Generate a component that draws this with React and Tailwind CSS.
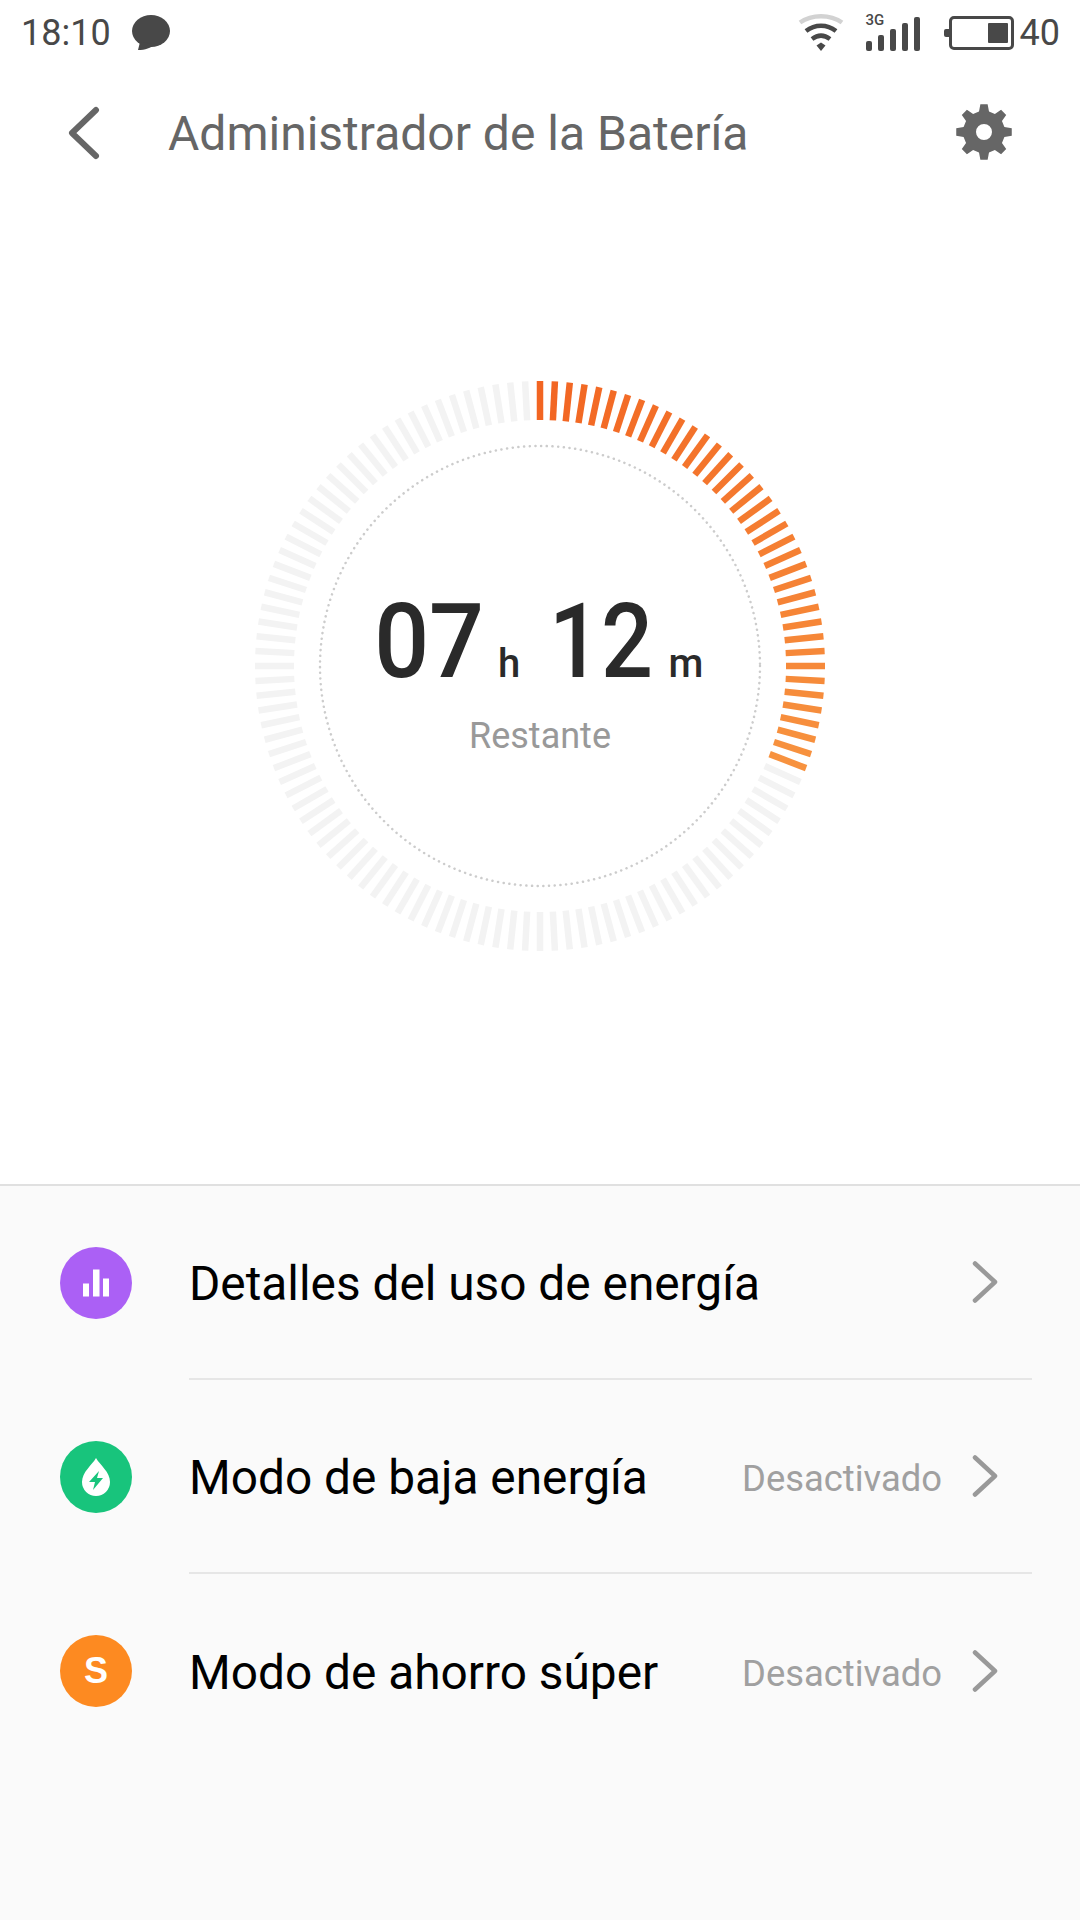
const TICKS = 120;
const ACTIVE = 38;

// orange ticks fade from #f26522 at the top to #f7923f at the end of the arc
const tickColor = (i) => {
  if (i >= ACTIVE) return '#f3f3f3';
  const t = i / (ACTIVE - 1);
  const r = Math.round(242 + 5 * t);
  const g = Math.round(101 + 45 * t);
  const b = Math.round(34 + 29 * t);
  return `rgb(${r},${g},${b})`;
};

const BatteryRing = () => (
  <svg width="600" height="600" viewBox="-300 -300 600 600">
    {Array.from({ length: TICKS }).map((_, i) => (
      <rect
        key={i}
        x="-3.25"
        y="-285"
        width="6.5"
        height="39"
        fill={tickColor(i)}
        transform={`rotate(${i * 3})`}
      />
    ))}
    <circle
      cx="0"
      cy="0"
      r="220"
      fill="none"
      stroke="#cccccc"
      strokeWidth="2.5"
      strokeLinecap="round"
      strokeDasharray="0.1 5.6"
    />
  </svg>
);

// 8 teeth gear, points worked out instead of typed by hand
const gearPath = () => {
  const pts = [];
  const rOut = 28;
  const rIn = 21;
  for (let i = 0; i < 8; i++) {
    const a = (i * Math.PI) / 4 - Math.PI / 2;
    [
      [-0.24, rIn],
      [-0.13, rOut],
      [0.13, rOut],
      [0.24, rIn],
    ].forEach(([d, r]) => pts.push([r * Math.cos(a + d), r * Math.sin(a + d)]));
  }
  return 'M' + pts.map((p) => p[0].toFixed(2) + ' ' + p[1].toFixed(2)).join('L') + 'Z';
};

const GearIcon = () => (
  <svg width="58" height="58" viewBox="-29 -29 58 58">
    <path
      fillRule="evenodd"
      fill="#666666"
      d={gearPath() + 'M8 0A8 8 0 1 0 -8 0A8 8 0 1 0 8 0Z'}
    />
  </svg>
);

const StatusIcons = () => (
  <div className="flex items-center">
    <svg width="46" height="40" viewBox="0 0 46 40" fill="none" className="mr-[22px]">
      <path d="M2 9.5C14 1 32 1 44 9.5" stroke="#d2d2d2" strokeWidth="4.5" />
      <path d="M8 18C17 11 29 11 38 18" stroke="#484848" strokeWidth="4.5" />
      <path d="M14 26C20 21.5 26 21.5 32 26" stroke="#484848" strokeWidth="4.5" />
      <path d="M18.5 32.5L23 29.5L27.5 32.5L23 38Z" fill="#484848" />
    </svg>
    <div className="relative w-[54px] h-[36px] mr-[24px]">
      <span className="absolute left-0 top-[-3px] text-[15px] leading-[16px] font-medium text-[#484848]">
        3G
      </span>
      <div className="absolute inset-0 flex items-end justify-between">
        <div className="w-[6px] h-[10px] rounded-[2px] bg-[#484848]" />
        <div className="w-[6px] h-[16px] rounded-[2px] bg-[#484848]" />
        <div className="w-[6px] h-[22px] rounded-[2px] bg-[#484848]" />
        <div className="w-[6px] h-[28px] rounded-[2px] bg-[#484848]" />
        <div className="w-[6px] h-[34px] rounded-[2px] bg-[#484848]" />
      </div>
    </div>
    <div className="flex items-center mr-[6px]">
      <div className="w-[5px] h-[8px] rounded-l-[2px] bg-[#484848]" />
      <div className="w-[65px] h-[34px] rounded-[5px] border-[3.5px] border-[#484848] flex justify-end items-center pr-[3px]">
        <div className="w-[20px] h-[20px] rounded-[1px] bg-[#484848]" />
      </div>
    </div>
    <span className="text-[36px] leading-none text-[#484848]">40</span>
  </div>
);

const BackArrow = () => (
  <svg width="36" height="54" viewBox="0 0 36 54" fill="none">
    <path
      d="M30 4L6 27L30 50"
      stroke="#666666"
      strokeWidth="6"
      strokeLinecap="round"
      strokeLinejoin="round"
    />
  </svg>
);

const Chevron = () => (
  <svg width="26" height="44" viewBox="0 0 26 44" fill="none">
    <path
      d="M3 3.5L23 22L3 40.5"
      stroke="#999999"
      strokeWidth="4.5"
      strokeLinecap="round"
      strokeLinejoin="round"
    />
  </svg>
);

const MenuRow = ({ icon, color, label, value, last }) => (
  <div className="flex items-stretch h-[194px] pl-[60px]">
    <div className="flex items-center">
      <div
        className={`w-[72px] h-[72px] rounded-full flex items-center justify-center ${color}`}
      >
        {icon}
      </div>
    </div>
    <div
      className={`flex-1 ml-[57px] mr-[48px] pr-[34px] flex items-center justify-between ${
        last ? '' : 'border-b-2 border-[#e6e6e6]'
      }`}
    >
      <span className="text-[47.8px] text-black leading-none mt-[5px]">{label}</span>
      <div className="flex items-center">
        {value && (
          <span className="text-[36.4px] text-[#a0a0a0] mr-[30px] mt-[6px]">{value}</span>
        )}
        <Chevron />
      </div>
    </div>
  </div>
);

const App = () => {
  return (
    <div className="w-[1080px] h-[1920px] flex flex-col bg-white font-['Roboto',sans-serif]">
      <div className="h-[64px] flex items-center justify-between pl-[21px] pr-[20px] pt-[2px]">
        <div className="flex items-center">
          <span className="text-[36px] leading-none text-[#484848]">18:10</span>
          <svg width="40" height="38" viewBox="0 0 40 38" className="ml-[20px]">
            <ellipse cx="20" cy="17" rx="19" ry="16" fill="#484848" />
            <path d="M9 28L7 36C14 36 20 34 24 30Z" fill="#484848" />
          </svg>
        </div>
        <StatusIcons />
      </div>

      <div className="h-[136px] flex items-center justify-between pl-[66px] pr-[67px]">
        <div className="flex items-center">
          <div className="mt-[2px]">
            <BackArrow />
          </div>
          <span className="ml-[66px] mt-[3px] text-[48px] leading-none text-[#666666]">
            Administrador de la Batería
          </span>
        </div>
        <GearIcon />
      </div>

      <div className="flex-1 flex justify-center pt-[166px]">
        <div className="relative w-[600px] h-[600px]">
          <BatteryRing />
          <div className="absolute inset-0 flex flex-col items-center pt-[224px]">
            <div className="flex items-baseline pr-[7px] text-[#2a2a2a] font-medium leading-none">
              <span className="text-[104px] inline-block scale-x-[.93]">07</span>
              <span className="text-[40px] ml-[10px]">h</span>
              <span className="text-[104px] inline-block scale-x-[.88] ml-[22px]">12</span>
              <span className="text-[40px] ml-[8px]">m</span>
            </div>
            <span className="mt-[24px] text-[36px] leading-none text-[#999999]">Restante</span>
          </div>
        </div>
      </div>

      <div className="h-[736px] bg-[#fafafa] border-t-2 border-[#e0e0e0]">
        <MenuRow
          color="bg-[#ab60f5]"
          label="Detalles del uso de energía"
          icon={
            <svg width="28" height="28" viewBox="0 0 28 28" fill="#ffffff">
              <rect x="1" y="14.5" width="6" height="13" />
              <rect x="11" y="0.5" width="6.5" height="27" />
              <rect x="21" y="9.5" width="6" height="18" />
            </svg>
          }
        />
        <MenuRow
          color="bg-[#18c47c]"
          label="Modo de baja energía"
          value="Desactivado"
          icon={
            <svg width="30" height="40" viewBox="0 0 30 40">
              <path
                d="M15 1C19 8 29 15 29 25A14 14 0 0 1 1 25C1 15 11 8 15 1Z"
                fill="#ffffff"
              />
              <path d="M18 14L8 25H14L12 33L22 21H16Z" fill="#18c47c" />
            </svg>
          }
        />
        <MenuRow
          last
          color="bg-[#fd8a21]"
          label="Modo de ahorro súper"
          value="Desactivado"
          icon={
            <span className="text-[36px] leading-none font-bold text-white font-['Liberation_Sans',sans-serif]">
              S
            </span>
          }
        />
      </div>
    </div>
  );
};

export default App;
